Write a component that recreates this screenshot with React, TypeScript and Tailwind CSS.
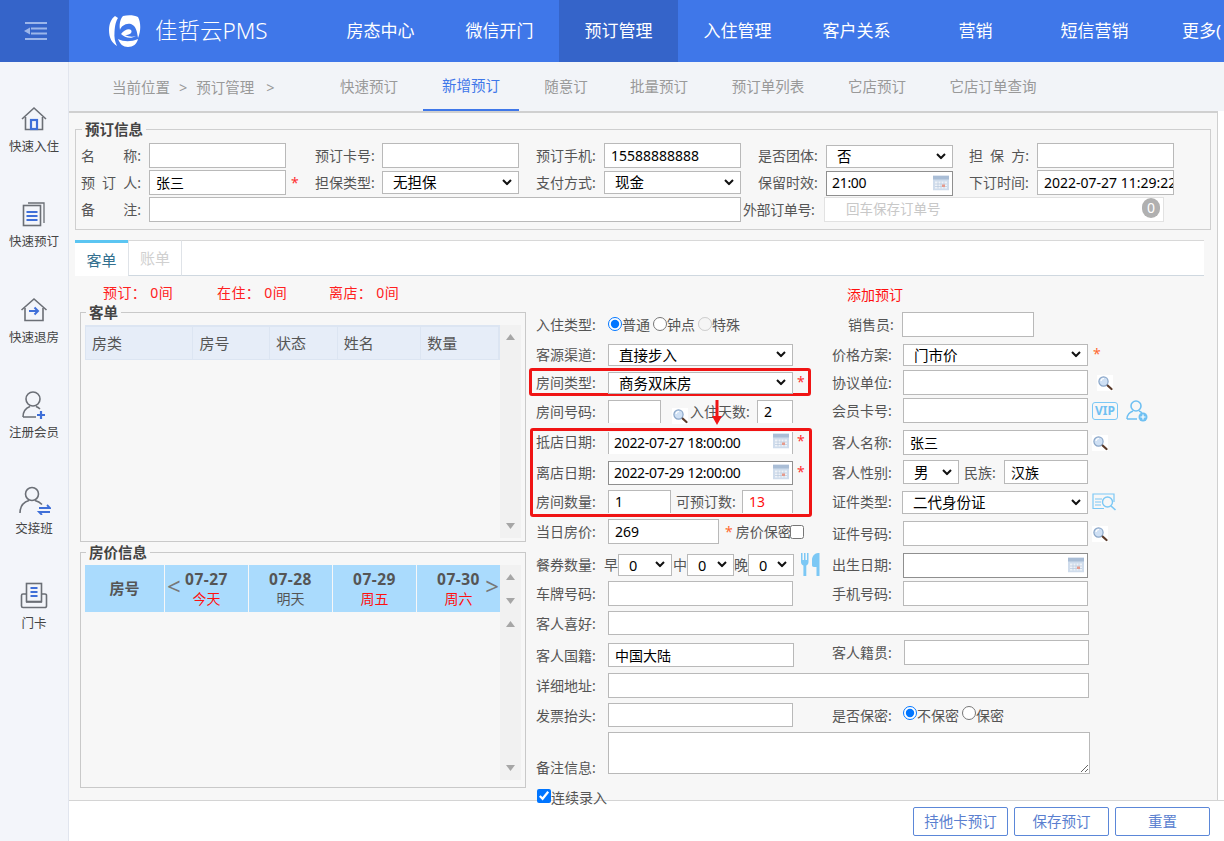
import type { ReactNode } from "react";

const inputBase = "border border-[#b9b9b9] bg-white pb-[1px] pl-[6px] text-[14px] text-black outline-none";
const dateInput = "h-full w-full border border-[#8f8f8f] bg-white pb-[1px] pl-[5px] text-[14px] tracking-[-0.3px] text-black outline-none";

function Label({ children, className = "" }: { children: ReactNode; className?: string }) {
  return <span className={`whitespace-nowrap text-[14px] text-[#555] ${className}`}>{children}</span>;
}

// spaced out labels like 名  称:
function Spread({ chars }: { chars: string[] }) {
  return (
    <span className="flex w-[60px] justify-between text-[14px] text-[#555]">
      {chars.map((c) => (
        <span key={c}>{c}</span>
      ))}
    </span>
  );
}

function Star({ className = "" }: { className?: string }) {
  return <span className={`text-[14px] leading-none text-[#ff3030] ${className}`}>*</span>;
}

function Select({ value, className = "" }: { value: string; className?: string }) {
  return (
    <div className={`relative ${className}`}>
      <select
        className="h-full w-full appearance-none border border-[#b9b9b9] bg-white pl-[10px] text-[14.5px] leading-none text-black outline-none"
        defaultValue={value}
      >
        <option>{value}</option>
      </select>
      <svg width="10" height="7" viewBox="0 0 10 7" fill="none" className="pointer-events-none absolute right-[7px] top-1/2 -translate-y-1/2">
        <path d="M1 1.5l4 4 4-4" stroke="#111" strokeWidth="2" />
      </svg>
    </div>
  );
}

function Calendar() {
  return (
    <svg width="16" height="15" viewBox="0 0 16 15" className="absolute right-[4px] top-1/2 -translate-y-1/2">
      <rect x="0" y="0" width="16" height="15" fill="#cfdcec" />
      <rect x="0" y="0" width="16" height="4" fill="#a9bdd6" />
      <rect x="2" y="6" width="12" height="7" fill="#eef2f8" />
      <path d="M2 8.5h12M2 11h12M5 6v7M8 6v7M11 6v7" stroke="#b8c8dc" strokeWidth="0.7" />
      <rect x="9" y="9" width="3" height="2.5" fill="#e59a8c" />
    </svg>
  );
}

function Magnifier() {
  return (
    <svg width="16" height="16" viewBox="0 0 16 16" className="shrink-0">
      <rect width="16" height="16" fill="#fff" />
      <path d="M9.5 9.5L14.5 14" stroke="#5a3a2a" strokeWidth="2.2" strokeLinecap="round" />
      <circle cx="6.5" cy="6.5" r="4.6" fill="#cfe0f4" stroke="#8aa6c8" strokeWidth="1.2" />
      <path d="M4 6a3 3 0 0 1 3-2.5" stroke="#fff" strokeWidth="1.2" fill="none" />
    </svg>
  );
}

function Triangle({ down = false }: { down?: boolean }) {
  return (
    <svg width="9" height="6" viewBox="0 0 9 6" className="shrink-0">
      <path d={down ? "M0 0h9L4.5 6z" : "M4.5 0L9 6H0z"} fill="#a6a6a6" />
    </svg>
  );
}

function Legend({ children }: { children: ReactNode }) {
  return <legend className="ml-[1px] px-[3px] text-[14.5px] font-bold leading-[16px] text-[#444]">{children}</legend>;
}

const grayIcon = "#6b6f76";
const blueIcon = "#3f6fd8";

const SIDE_ITEMS: { label: string; icon: ReactNode }[] = [
  {
    label: "快速入住",
    icon: (
      <svg width="28" height="26" viewBox="0 0 28 26" fill="none">
        <path d="M2 13L14 2l12 11" stroke={grayIcon} strokeWidth="1.6" />
        <path d="M5.5 11v12.5h17V11" stroke={grayIcon} strokeWidth="1.6" />
        <rect x="11" y="14" width="6" height="9" stroke={blueIcon} strokeWidth="2.2" />
      </svg>
    ),
  },
  {
    label: "快速预订",
    icon: (
      <svg width="24" height="26" viewBox="0 0 24 26" fill="none">
        <path d="M6 2h16v20" stroke={grayIcon} strokeWidth="1.3" />
        <rect x="1.5" y="4.5" width="17" height="20" stroke={grayIcon} strokeWidth="1.6" />
        <path d="M4.5 11h11M4.5 15h11M4.5 19h11" stroke={blueIcon} strokeWidth="1.8" />
      </svg>
    ),
  },
  {
    label: "快速退房",
    icon: (
      <svg width="28" height="26" viewBox="0 0 28 26" fill="none">
        <path d="M1.5 13L14 2l12.5 11" stroke={grayIcon} strokeWidth="1.6" />
        <path d="M5 11v12.5h18V11" stroke={grayIcon} strokeWidth="1.6" />
        <path d="M9 14h9M14.5 10.5L18 14l-3.5 3.5" stroke={blueIcon} strokeWidth="2" />
      </svg>
    ),
  },
  {
    label: "注册会员",
    icon: (
      <svg width="26" height="28" viewBox="0 0 26 28" fill="none">
        <circle cx="12" cy="8" r="7" stroke={grayIcon} strokeWidth="1.6" />
        <path d="M2 26c0-5 3-9 7-10.5M15 15.5c1.5.5 3 1.5 4 2.5M2 26h13" stroke={grayIcon} strokeWidth="1.6" />
        <path d="M16 24h8M20 20v8" stroke={blueIcon} strokeWidth="2.2" />
      </svg>
    ),
  },
  {
    label: "交接班",
    icon: (
      <svg width="33" height="29" viewBox="0 0 33 29" fill="none">
        <circle cx="14" cy="8" r="6.5" stroke={grayIcon} strokeWidth="1.6" />
        <path d="M2 27c0-7 4-11 9-12.5M17 14.5c3 .8 5 2 7 4" stroke={grayIcon} strokeWidth="1.6" />
        <path d="M21 22h11l-3-3M32 26H21l3 3" stroke={blueIcon} strokeWidth="1.8" />
      </svg>
    ),
  },
  {
    label: "门卡",
    icon: (
      <svg width="28" height="27" viewBox="0 0 28 27" fill="none">
        <path d="M6 12H3a1.5 1.5 0 0 0-1.5 1.5V24A1.5 1.5 0 0 0 3 25.5h22a1.5 1.5 0 0 0 1.5-1.5V13.5A1.5 1.5 0 0 0 25 12h-3" stroke={grayIcon} strokeWidth="1.6" />
        <rect x="6.5" y="1.5" width="15" height="18" stroke={grayIcon} strokeWidth="1.6" />
        <path d="M6 20h16" stroke={grayIcon} strokeWidth="1.6" />
        <path d="M10.5 6h7M10.5 10h7M10.5 14h7" stroke={blueIcon} strokeWidth="1.8" />
      </svg>
    ),
  },
];

const NAV = ["房态中心", "微信开门", "预订管理", "入住管理", "客户关系", "营销", "短信营销"];

function TopBar() {
  return (
    <div className="flex h-[62px] shrink-0 bg-[#3f77e9] text-white">
      <div className="flex w-[69px] shrink-0 items-center justify-center bg-[#3564c9]">
        <svg width="24" height="18" viewBox="0 0 24 18" fill="none" stroke="#9cb6ea" strokeWidth="2">
          <path d="M2 1h22M8 6.5h16M8 11.5h16M2 17h22" />
          <path d="M7 5.5v7L1 9z" fill="#9cb6ea" stroke="none" />
        </svg>
      </div>
      <div className="flex w-[252px] shrink-0 items-center pl-[40px]">
        <svg width="32" height="33" viewBox="0 0 32 33" fill="#fff">
          <path d="M6 1C2 4 0 9 0 15c0 8 3 13 8 16-2-4-3-9-2.500-14C6 10 7 6 9 3z" />
          <path d="M14 1c5-1 11-1 15 1 3 6 3 14 0 21-1-7-2-12-7-14-5-1.500-10 2-11 6-1-5 0-11 3-14z" />
          <path d="M12 19c3-4 8-6 10-4 2 3-2 5-6 5 4 2 8 2 11 1-5 3-11 2-15-2z" />
          <path d="M9 24c6 3 13 3 20 0-1 5-5 8-10 8-5 0-8-3-10-8z" />
        </svg>
        <span className="ml-[14px] whitespace-nowrap text-[22.5px] font-light leading-none">佳哲云PMS</span>
      </div>
      <div className="flex flex-1 overflow-hidden">
        {NAV.map((item, i) => (
          <div
            key={item}
            className={`flex w-[119px] shrink-0 items-center justify-center text-[17px] ${i === 2 ? "bg-[#3564c9]" : ""}`}
          >
            {item}
          </div>
        ))}
        <div className="flex items-center whitespace-nowrap pl-[28px] text-[17px]">更多(</div>
      </div>
    </div>
  );
}

function SideBar() {
  return (
    <div className="flex w-[69px] shrink-0 flex-col items-center border-r border-[#e1e5ee] bg-[#f3f5fa] pt-[42px]">
      {SIDE_ITEMS.map((item) => (
        <div key={item.label} className="flex h-[95.4px] w-full shrink-0 flex-col items-center">
          <div className="flex h-[30px] items-center justify-center">{item.icon}</div>
          <div className="mt-[4px] whitespace-nowrap text-[12.5px] leading-[18px] text-[#444]">{item.label}</div>
        </div>
      ))}
    </div>
  );
}

const SUB_TABS = [
  { label: "快速预订", w: "w-[108px]" },
  { label: "新增预订", w: "w-[96px]" },
  { label: "随意订", w: "w-[94px]" },
  { label: "批量预订", w: "w-[92px]" },
  { label: "预订单列表", w: "w-[126px]" },
  { label: "它店预订", w: "w-[92px]" },
  { label: "它店订单查询", w: "w-[140px]" },
];

function SubNav() {
  return (
    <div className="flex h-[49px] shrink-0 items-center bg-[#f2f4f8] pl-[43px] text-[14.5px] text-[#999]">
      <div className="flex w-[203px] shrink-0 whitespace-nowrap pt-[3px]">
        <span>当前位置</span>
        <span className="ml-[9px]">&gt;</span>
        <span className="ml-[9px]">预订管理</span>
        <span className="ml-[12px]">&gt;</span>
      </div>
      <div className="flex h-full items-stretch">
        {SUB_TABS.map((t, i) => (
          <div
            key={t.label}
            className={`flex shrink-0 items-center justify-center ${t.w} ${i === 1 ? "border-b-2 border-[#3f77e9] text-[#3f77e9]" : ""}`}
          >
            {t.label}
          </div>
        ))}
      </div>
    </div>
  );
}

function InfoFieldset() {
  return (
    <fieldset className="ml-[6px] h-[109px] w-[1136px] border border-[#cfcfcf] pl-[5px]">
      <Legend>预订信息</Legend>
      <div className="mt-[6px] grid grid-cols-[68px_137px_29px_67px_137px_17px_68px_137px_17px_68px_127px_16px_68px_137px] grid-rows-[25px_25px_25px] items-center gap-y-[2px]">
        <Spread chars={["名", "称:"]} />
        <input className={`${inputBase} h-full`} />
        <span />
        <Label>预订卡号:</Label>
        <input className={`${inputBase} h-full`} />
        <span />
        <Label>预订手机:</Label>
        <input className={`${inputBase} h-full`} defaultValue="15588888888" />
        <span />
        <Label>是否团体:</Label>
        <Select value="否" className="h-[23px]" />
        <span />
        <Spread chars={["担", "保", "方:"]} />
        <input className={`${inputBase} h-full`} />

        <Spread chars={["预", "订", "人:"]} />
        <input className={`${inputBase} h-full`} defaultValue="张三" />
        <Star className="pl-[5px]" />
        <Label>担保类型:</Label>
        <Select value="无担保" className="h-[23px] self-start" />
        <span />
        <Label>支付方式:</Label>
        <Select value="现金" className="h-[23px] self-start" />
        <span />
        <Label>保留时效:</Label>
        <div className="relative h-full">
          <input className={dateInput} defaultValue="21:00" />
          <Calendar />
        </div>
        <span />
        <Label>下订时间:</Label>
        <input className={`${inputBase} h-full w-full`} defaultValue="2022-07-27 11:29:22" />

        <Spread chars={["备", "注:"]} />
        <input className={`${inputBase} col-span-7 h-full`} />
        <div className="col-span-6 flex h-full items-center">
          <Label className="ml-[2px] w-[81px] text-[13.5px] tracking-[-0.4px]">外部订单号:</Label>
          <div className="relative flex h-full w-[340px] items-center border border-[#e2e2e2] bg-white pl-[21px] text-[13.5px] text-[#c8c8c8]">
            回车保存订单号
            <span className="absolute right-[3px] top-[0px] flex h-[20px] w-[18px] items-center justify-center rounded-full bg-[#b0b0b0] text-[14px] leading-none text-white">
              0
            </span>
          </div>
        </div>
      </div>
    </fieldset>
  );
}

function Tabs() {
  return (
    <div className="ml-[6px] mt-[10px] flex h-[36px] w-[1129px] shrink-0 bg-white">
      <div className="flex w-[53px] items-center justify-center border-t-[3px] border-[#5bc5f2] pt-[2px] text-[15px] text-[#33708f]">客单</div>
      <div className="flex w-[54px] items-center justify-center border border-x-[#dfe3e8] border-t-[#d8d8d8] border-b-[#cfd8e0] text-[15px] text-[#d0d0d0]">账单</div>
      <div className="flex-1 border-y border-t-[#d8d8d8] border-b-[#cfd8e0]" />
    </div>
  );
}

const ORDER_COLS = [
  { label: "房类", w: "w-[108px]" },
  { label: "房号", w: "w-[77px]" },
  { label: "状态", w: "w-[68px]" },
  { label: "姓名", w: "w-[84px]" },
  { label: "数量", w: "w-[78px]" },
];

const PRICE_COLS = [
  { date: "07-27", day: "今天", red: true, prev: true },
  { date: "07-28", day: "明天", red: false },
  { date: "07-29", day: "周五", red: true },
  { date: "07-30", day: "周六", red: true, next: true },
];

function LeftColumn() {
  return (
    <div className="ml-[11px] w-[446px] shrink-0">
      <div className="flex h-[28px] items-center pl-[23px] pt-[4px] text-[14px] tracking-[0.4px] text-[#ff2020]">
        <span className="w-[114px] whitespace-nowrap">预订： 0间</span>
        <span className="w-[112px] whitespace-nowrap">在住： 0间</span>
        <span className="whitespace-nowrap">离店： 0间</span>
      </div>
      <fieldset className="h-[238px] border border-[#c9c9c9] pl-[4px]">
        <Legend>客单</Legend>
        <div className="mt-[5px] flex h-[213px]">
          <div className="w-[415px]">
            <div className="flex h-[35px] border border-t-2 border-[#dce5f2] bg-[#e6edf8] text-[15px] text-[#555]">
              {ORDER_COLS.map((c) => (
                <div key={c.label} className={`flex items-center border-r border-[#dce5f2] pl-[6px] ${c.w}`}>
                  {c.label}
                </div>
              ))}
            </div>
          </div>
          <div className="flex w-[21px] flex-col items-center justify-between bg-[#f1f1f1] py-[9px]">
            <Triangle />
            <Triangle down />
          </div>
        </div>
      </fieldset>
      <fieldset className="mt-[2px] h-[244px] border border-[#c9c9c9] pl-[4px]">
        <Legend>房价信息</Legend>
        <div className="mt-[5px] flex">
          <div className="flex h-[47px] w-[415px] gap-[1px]">
            <div className="flex w-[79px] items-center justify-center bg-[#aadbfd] text-[15px] font-bold text-[#555]">房号</div>
            {PRICE_COLS.map((c) => (
              <div key={c.date} className="relative flex flex-1 flex-col items-center justify-center bg-[#aadbfd] text-[14px] leading-[20px]">
                <span className="text-[15.5px] font-bold tracking-[0.5px] text-[#555]">{c.date}</span>
                <span className={c.red ? "text-[#ff1010]" : "text-[#555]"}>{c.day}</span>
                {c.prev && <span className="absolute left-[2px] top-[9px] text-[24px] leading-none text-[#777]">&lt;</span>}
                {c.next && <span className="absolute right-[1px] top-[9px] text-[24px] leading-none text-[#777]">&gt;</span>}
              </div>
            ))}
          </div>
          <div className="flex w-[21px] flex-col items-center gap-[18px] bg-[#f1f1f1] pt-[9px]">
            <Triangle />
            <Triangle down />
          </div>
        </div>
        <div className="ml-[415px] flex h-[168px] w-[21px] flex-col items-center justify-between bg-[#f1f1f1] py-[9px]">
          <Triangle />
          <Triangle down />
        </div>
      </fieldset>
    </div>
  );
}

function Row({ label, className = "", children }: { label: string; className?: string; children?: ReactNode }) {
  return (
    <div className={`flex items-center ${className}`}>
      <Label className="w-[72px] shrink-0">{label}:</Label>
      {children}
    </div>
  );
}

function UpperLeft() {
  return (
    <div className="w-[290px] shrink-0">
      <Row label="入住类型" className="mt-[37px] h-[22px]">
        <label className="flex items-center text-[14px] text-[#555]">
          <input type="radio" name="stay" defaultChecked className="m-0 h-[14px] w-[14px]" />
          普通
        </label>
        <label className="ml-[3px] flex items-center text-[14px] text-[#555]">
          <input type="radio" name="stay" className="m-0 h-[14px] w-[14px]" />
          钟点
        </label>
        <label className="ml-[3px] flex items-center text-[14px] text-[#555]">
          <input type="radio" name="stay" disabled className="m-0 h-[14px] w-[14px]" />
          特殊
        </label>
      </Row>
      <Row label="客源渠道" className="mt-[8px] h-[22px]">
        <Select value="直接步入" className="h-full w-[185px]" />
      </Row>
      <div className="-ml-[7px] mt-[3px] flex h-[28px] w-[282px] items-center rounded-[3px] border-[3px] border-[#f01414] pl-[4px]">
        <Row label="房间类型" className="h-[22px]">
          <Select value="商务双床房" className="h-full w-[185px]" />
          <Star className="ml-[4px]" />
        </Row>
      </div>
      <div className="relative mt-[4px]">
        <Row label="房间号码" className="h-[23px]">
          <input className={`${inputBase} h-full w-[53px] border-b-0`} />
          <span className="ml-[11px] mt-[9px]">
            <Magnifier />
          </span>
          <Label className="ml-[2px] w-[67px]">入住天数:</Label>
          <input className={`${inputBase} h-full w-[36px] border-b-0`} defaultValue="2" />
        </Row>
        <svg width="10" height="25" viewBox="0 0 10 25" className="absolute left-[176px] top-0">
          <path d="M3.5 0h3v16H10L5 25 0 16h3.5z" fill="#f01414" />
        </svg>
      </div>
      <div className="-ml-[6px] mt-[5px] h-[89px] w-[282px] rounded-[3px] border-[3px] border-[#f01414] pl-[3px]">
        <Row label="抵店日期" className="-mt-[1px] h-[22px]">
          <div className="relative h-full w-[185px]">
            <input className={`${dateInput} border-y-0 !border-[#b9b9b9]`} defaultValue="2022-07-27 18:00:00" />
            <Calendar />
          </div>
          <Star className="ml-[4px]" />
        </Row>
        <Row label="离店日期" className="mt-[8px] h-[24px]">
          <div className="relative h-full w-[185px]">
            <input className={dateInput} defaultValue="2022-07-29 12:00:00" />
            <Calendar />
          </div>
          <Star className="ml-[4px]" />
        </Row>
        <Row label="房间数量" className="mt-[6px] h-[23px]">
          <input className={`${inputBase} h-full w-[63px] border-b-0`} defaultValue="1" />
          <Label className="ml-[5px] w-[66px]">可预订数:</Label>
          <input className={`${inputBase} h-full w-[51px] border-b-0 !text-[#ff1010]`} defaultValue="13" />
        </Row>
      </div>
      <Row label="当日房价" className="mt-[2px] h-[25px]">
        <input className={`${inputBase} h-full w-[111px]`} defaultValue="269" />
        <Star className="ml-[6px] !text-[#ff6a30]" />
        <Label className="ml-[3px]">房价保密</Label>
        <input type="checkbox" className="m-0 -ml-[2px] h-[14px] w-[14px]" />
      </Row>
      <Row label="餐券数量" className="mt-[9px] h-[22px]">
        <Label className="-ml-[4px] w-[14px]">早</Label>
        <Select value="0" className="h-full w-[54px]" />
        <Label className="w-[15px] pl-[1px]">中</Label>
        <Select value="0" className="h-full w-[47px]" />
        <Label className="w-[14px]">晚</Label>
        <Select value="0" className="h-full w-[46px]" />
        <svg width="20" height="23" viewBox="0 0 20 23" fill="#7cc8f5" className="ml-[7px] shrink-0">
          <path d="M0 0h1.5v7H3V0h1.5v7H6V0h1.5v9c0 2-1 3-2.2 3.4V23H2.400V12.400C1 12 0 11 0 9z" />
          <path d="M11 7c0-4 3-7 6-7h1.5v23h-3v-9H13c-1.500 0-2-1-2-2z" />
        </svg>
      </Row>
      <Row label="车牌号码" className="mt-[6px] h-[25px]">
        <input className={`${inputBase} h-full w-[185px]`} />
      </Row>
    </div>
  );
}

function RightRow({ label, className = "", children }: { label: string; className?: string; children?: ReactNode }) {
  return (
    <div className={`flex items-center ${className}`}>
      <Label className="w-[71px] shrink-0">{label}:</Label>
      {children}
    </div>
  );
}

function UpperRight() {
  return (
    <div className="w-[340px] shrink-0 pl-[6px]">
      <div className="mt-[11px] h-[16px] whitespace-nowrap pl-[15px] text-[14px] leading-[16px] text-[#ff1010]">添加预订</div>
      <RightRow label="销售员" className="mt-[9px] h-[25px] pl-[16px]">
        <input className={`${inputBase} -ml-[17px] h-full w-[132px]`} />
      </RightRow>
      <RightRow label="价格方案" className="mt-[6px] h-[22px]">
        <Select value="门市价" className="h-full w-[185px]" />
        <Star className="ml-[5px] !text-[#ff6a30]" />
      </RightRow>
      <RightRow label="协议单位" className="mt-[5px] h-[25px]">
        <input className={`${inputBase} h-full w-[185px]`} />
        <span className="ml-[9px]">
          <Magnifier />
        </span>
      </RightRow>
      <RightRow label="会员卡号" className="mt-[3px] h-[25px]">
        <input className={`${inputBase} h-full w-[185px]`} />
        <span className="ml-[4px] flex h-[18px] w-[26px] items-center justify-center rounded-[3px] border border-[#7cc8f5] text-[12px] font-bold leading-none text-[#6fc0f2]">
          VIP
        </span>
        <svg width="22" height="22" viewBox="0 0 22 22" fill="none" className="ml-[8px]">
          <circle cx="10" cy="6" r="5" stroke="#6fc0f2" strokeWidth="1.6" />
          <path d="M1 19c0-4 3-7 6-8M13 11c1 .3 2 1 3 1.8M1 19h10" stroke="#6fc0f2" strokeWidth="1.6" />
          <circle cx="17" cy="17" r="4.5" fill="#6fc0f2" />
          <path d="M14.5 17h5M17 14.5v5" stroke="#fff" strokeWidth="1.2" />
        </svg>
      </RightRow>
      <RightRow label="客人名称" className="mt-[7px] h-[25px]">
        <input className={`${inputBase} h-full w-[185px]`} defaultValue="张三" />
        <span className="ml-[4px]">
          <Magnifier />
        </span>
      </RightRow>
      <RightRow label="客人性别" className="mt-[5px] h-[24px]">
        <Select value="男" className="h-full w-[56px]" />
        <Label className="ml-[5px] w-[40px]">民族:</Label>
        <input className={`${inputBase} h-full w-[84px]`} defaultValue="汉族" />
      </RightRow>
      <RightRow label="证件类型" className="mt-[6px] h-[23px]">
        <Select value="二代身份证" className="-ml-[1px] h-full w-[186px]" />
        <svg width="25" height="18" viewBox="0 0 25 18" fill="none" stroke="#7cc8f5" className="ml-[4px]">
          <path d="M12 15.5H1V1h21v8" strokeWidth="1.2" />
          <path d="M3 6h7M3 9h6M3 12h6" strokeWidth="1.2" />
          <circle cx="15.5" cy="9" r="5" strokeWidth="1.4" />
          <path d="M19 13l4.5 4" strokeWidth="1.6" />
        </svg>
      </RightRow>
      <RightRow label="证件号码" className="mt-[8px] h-[25px]">
        <input className={`${inputBase} h-full w-[185px]`} />
        <span className="ml-[4px]">
          <Magnifier />
        </span>
      </RightRow>
      <RightRow label="出生日期" className="mt-[6px] h-[25px]">
        <div className="relative h-full w-[185px]">
          <input className={dateInput} />
          <Calendar />
        </div>
      </RightRow>
      <RightRow label="手机号码" className="mt-[4px] h-[25px]">
        <input className={`${inputBase} h-full w-[185px]`} />
      </RightRow>
    </div>
  );
}

function RightForm() {
  return (
    <div className="ml-[10px] w-[630px] shrink-0">
      <div className="flex">
        <UpperLeft />
        <UpperRight />
      </div>
      <Row label="客人喜好" className="mt-[5px] h-[24px]">
        <input className={`${inputBase} h-full w-[481px]`} />
      </Row>
      <div className="mt-[5px] flex h-[27px] items-start">
        <Row label="客人国籍" className="mt-[3px] h-[24px] w-[296px]">
          <input className={`${inputBase} h-full w-[186px]`} defaultValue="中国大陆" />
        </Row>
        <RightRow label="客人籍贯" className="h-[25px] w-[257px]">
          <input className={`${inputBase} ml-[1px] h-full w-[185px]`} />
        </RightRow>
      </div>
      <Row label="详细地址" className="mt-[6px] h-[25px]">
        <input className={`${inputBase} h-full w-[481px]`} />
      </Row>
      <div className="mt-[5px] flex h-[24px] items-center">
        <Row label="发票抬头" className="h-full w-[296px]">
          <input className={`${inputBase} h-full w-[185px]`} />
        </Row>
        <RightRow label="是否保密" className="h-full">
          <label className="flex items-center text-[14px] text-[#555]">
            <input type="radio" name="secret" defaultChecked className="m-0 -mt-[4px] h-[14px] w-[14px]" />
            不保密
          </label>
          <label className="ml-[3px] flex items-center text-[14px] text-[#555]">
            <input type="radio" name="secret" className="m-0 -mt-[4px] h-[14px] w-[14px]" />
            保密
          </label>
        </RightRow>
      </div>
      <div className="mt-[5px] flex h-[42px] items-end">
        <Label className="-mb-[3px] w-[72px] shrink-0 leading-[18px]">备注信息:</Label>
        <textarea className="h-full w-[482px] border border-[#b9b9b9] bg-white outline-none" />
      </div>
      <label className="relative z-10 mt-[15px] flex items-start text-[14px] leading-[18px] text-[#555]">
        <input type="checkbox" defaultChecked className="m-0 ml-[1px] h-[14px] w-[14px]" />
        连续录入
      </label>
    </div>
  );
}

function BottomBar() {
  return (
    <div className="flex h-[41px] shrink-0 items-start justify-end gap-[6px] border-t border-[#d4d4d4] bg-white pr-[14px] pt-[6px]">
      {["持他卡预订", "保存预订", "重置"].map((b) => (
        <button key={b} className="h-[29px] w-[95px] rounded-[2px] border border-[#5b87d8] text-[14.5px] text-[#5b7fd0]">
          {b}
        </button>
      ))}
    </div>
  );
}

export default function App() {
  return (
    <div className="flex h-[841px] w-[1224px] flex-col overflow-hidden bg-white font-['Noto_Sans','Noto_Sans_CJK_SC',sans-serif]">
      <TopBar />
      <div className="flex min-h-0 flex-1">
        <SideBar />
        <div className="flex min-w-0 flex-1 flex-col">
          <SubNav />
          <div className="h-[689px] w-[1149px] shrink-0 border-r border-t-2 border-[#d0d0d0] bg-[#f7f7f7] pt-[8px]">
            <InfoFieldset />
            <Tabs />
            <div className="flex">
              <LeftColumn />
              <RightForm />
            </div>
          </div>
          <BottomBar />
        </div>
      </div>
    </div>
  );
}
